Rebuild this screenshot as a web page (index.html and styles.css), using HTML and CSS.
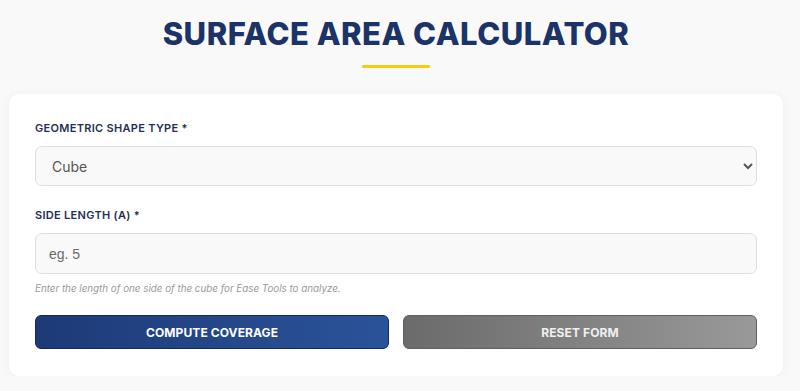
FILE: index.html
```html
<!DOCTYPE html>
<html lang="en">
<head>
  <meta charset="UTF-8" />
  <meta name="viewport" content="width=device-width, initial-scale=1.0"/>
  <title>Surface Area Calculator</title>
  <link rel="stylesheet" href="styles.css">
</head>
<body>
  <div class="page">
    <div class="title">
      <h1>SURFACE AREA CALCULATOR</h1>
      <div class="underline"></div>
    </div>

    <div class="card">
      <div class="field">
        <label for="shape">GEOMETRIC SHAPE TYPE *</label>
        <select id="shape">
          <option>Cube</option>
          <option>Sphere</option>
          <option>Cylinder</option>
          <option>Cone</option>
        </select>
      </div>

      <div class="field">
        <label for="side">SIDE LENGTH (A) *</label>
        <input id="side" type="text" placeholder="eg. 5" />
        <p class="hint">Enter the length of one side of the cube for Ease Tools to analyze.</p>
      </div>

      <div class="actions">
        <button class="btn btn-primary">COMPUTE COVERAGE</button>
        <button class="btn btn-reset">RESET FORM</button>
      </div>
    </div>
  </div>
</body>
</html>
```

FILE: styles.css
```css
* { box-sizing: border-box; }
body {
  margin: 0;
  font-family: Inter, "Noto Sans", sans-serif;
  background: #f9f9f9;
}

.page {
  padding: 14px 17px 0 9px;
}

.title {
  display: flex;
  flex-direction: column;
  align-items: center;
}

h1 {
  margin: 0;
  font-size: 31px;
  line-height: 40px;
  font-weight: 800;
  letter-spacing: 0.5px;
  color: #1b3366;
}

.underline {
  width: 68px;
  height: 3px;
  margin-top: 11px;
  background: #f8cc0c;
  border-radius: 2px;
}

.card {
  margin-top: 26px;
  background: #fff;
  border-radius: 10px;
  box-shadow: 0 2px 12px rgba(0, 0, 0, 0.05);
  padding: 27px 26px 27px;
}

.field {
  margin-bottom: 22px;
}

label {
  display: block;
  font-size: 11px;
  line-height: 14px;
  font-weight: 600;
  letter-spacing: 0.3px;
  color: #1f2f55;
  margin-bottom: 11px;
}

select, input {
  display: block;
  width: 100%;
  height: 40px;
  border: 1px solid #dedede;
  border-radius: 7px;
  background: #f9f9f9;
  color: #555;
  font-size: 14px;
  outline: none;
}

select {
  font-family: Inter, "Noto Sans", sans-serif;
  padding: 0 12px;
}

input {
  height: 41px;
  font-family: "Liberation Sans", Arial, sans-serif;
  padding: 0 13px;
}

input::placeholder {
  color: #6a6a6a;
}

.hint {
  margin: 8px 0 0;
  font-size: 9.8px;
  line-height: 14px;
  font-style: italic;
  color: #9a9a9a;
}

.field:nth-child(2) {
  margin-bottom: 19px;
}

.actions {
  display: flex;
  gap: 14px;
}

.btn {
  flex: 1;
  height: 34px;
  border-radius: 6px;
  font-family: Inter, "Noto Sans", sans-serif;
  font-size: 12px;
  font-weight: 700;
  letter-spacing: 0.1px;
  color: #fff;
  cursor: pointer;
}

.btn-primary {
  background: linear-gradient(90deg, #1d3a77, #2b5399);
  border: 1px solid #132a5c;
}

.btn-reset {
  background: linear-gradient(90deg, #6b6b6b, #999);
  border: 1px solid #5f5f5f;
  color: #f0f0f0;
}
```
